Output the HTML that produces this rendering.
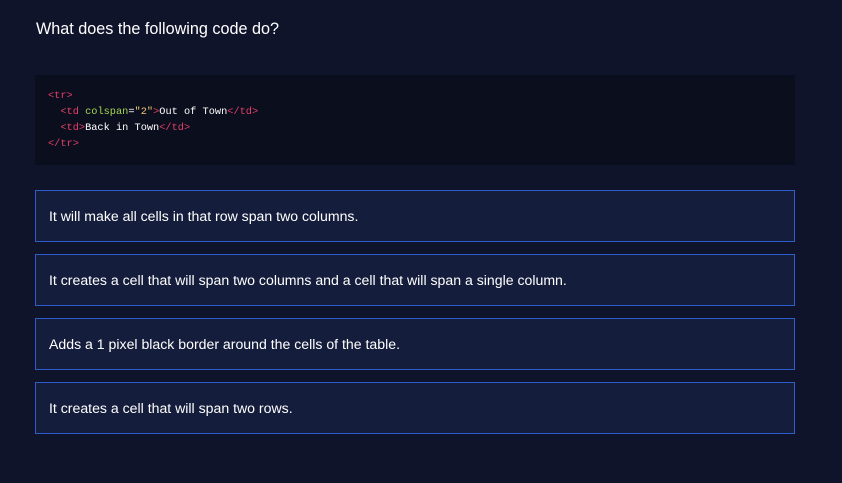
<!DOCTYPE html>
<html><head><style>
body{margin:0;width:842px;height:483px;background:#10142b;font-family:"Liberation Sans",sans-serif;color:#fff;overflow:hidden;position:relative}
h1{position:absolute;left:36px;top:20px;margin:0;font-size:16.2px;font-weight:normal;color:#fff}
.code{position:absolute;left:35px;top:75px;width:760px;height:90px;background:#0b0e1c;box-sizing:border-box;padding:13px 0 0 13px;font-family:"Liberation Mono",monospace;font-size:10.3px;line-height:16px;white-space:pre;color:#fff}
.t{color:#e83e6c}.a{color:#a6d651}.s{color:#f0c674}
.opt{position:absolute;left:35px;width:760px;height:52px;box-sizing:border-box;border:1px solid #2f5ccc;background:#151d3c;padding:0 13px;line-height:50px;font-size:14.1px;color:#fff}
</style></head><body>
<h1>What does the following code do?</h1>
<div class="code"><span class="t">&lt;tr&gt;</span>
  <span class="t">&lt;td</span> <span class="a">colspan</span>=<span class="s">"2"</span><span class="t">&gt;</span>Out of Town<span class="t">&lt;/td&gt;</span>
  <span class="t">&lt;td&gt;</span>Back in Town<span class="t">&lt;/td&gt;</span>
<span class="t">&lt;/tr&gt;</span></div>
<div class="opt" style="top:190px">It will make all cells in that row span two columns.</div>
<div class="opt" style="top:254px">It creates a cell that will span two columns and a cell that will span a single column.</div>
<div class="opt" style="top:318px">Adds a 1 pixel black border around the cells of the table.</div>
<div class="opt" style="top:382px">It creates a cell that will span two rows.</div>
</body></html>
